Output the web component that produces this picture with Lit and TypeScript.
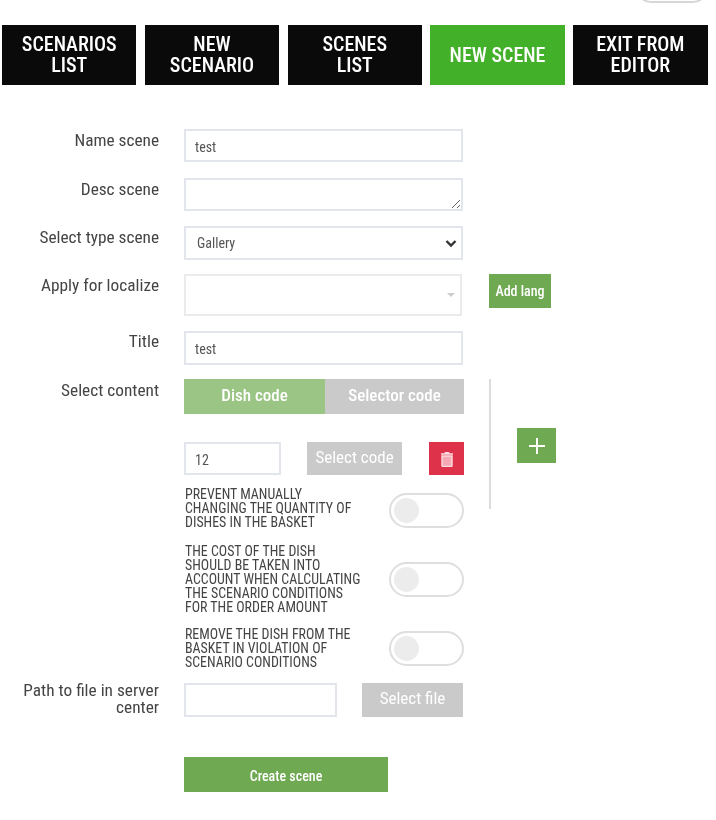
import { LitElement, html, css } from "lit";
import { customElement } from "lit/decorators.js";

@customElement("app-toggle")
class AppToggle extends LitElement {
  static styles = css`
    :host { display: block; flex: none; width: 75px; height: 35px; box-sizing: border-box; border: 2px solid #dedede; border-radius: 18px; background: #fff; padding: 3px; }
    .knob { width: 25px; height: 25px; border-radius: 50%; background: #ececec; }
  `;
  render() { return html`<div class="knob"></div>`; }
}

@customElement("app-root")
export class AppRoot extends LitElement {
  static styles = css`
    :host { display: block; width: 716px; height: 820px; overflow: hidden; background: #fff; font-family: Roboto, "Liberation Sans", sans-serif; color: #444; font-stretch: 75%; filter: blur(0.35px); }
    .corner { height: 3px; overflow: hidden; display: flex; justify-content: flex-end; align-items: flex-end; padding-right: 8px; }
    .corner .pill { width: 72px; height: 30px; flex: none; box-sizing: border-box; border: 2px solid #d6d6d6; border-radius: 15px; }
    nav { display: flex; gap: 8.4px; padding: 22px 0 0 2px; }
    nav a { width: 134.4px; height: 60px; display: flex; align-items: center; justify-content: center; text-align: center; background: #0a0a0a; color: #fff; font-size: 20px; line-height: 21px; font-weight: 500; }
    nav a.on { background: #43b02a; }
    form { display: flex; flex-direction: column; padding: 44px 0 0 0; }
    .row { display: grid; grid-template-columns: 159px 279px auto; column-gap: 25px; align-items: start; }
    label { text-align: right; font-size: 17.3px; line-height: 17px; padding-top: 3px; color: #444; }
    label.title { padding-top: 2px; }
    .box { box-sizing: border-box; width: 100%; border: 2px solid #e2e5eb; background: #fff; color: #555; font-size: 14px; padding: 2px 9px 0; display: flex; align-items: center; }
    .h33 { height: 33px; }
    .ta { position: relative; }
    .grip { position: absolute; right: 0; bottom: 0; }
    .sel { justify-content: space-between; height: 34px; padding: 0 3px 0 11px; }
    .chosen { height: 42px; width: 278px; border-color: #ebebeb; justify-content: flex-end; padding: 0 3px 0 0; }
    .caret { width: 0; height: 0; border: 4px solid transparent; border-top-color: #ccc; border-bottom: 0; margin-right: 2px; }
    .btn { display: flex; align-items: center; justify-content: center; color: #fff; font-size: 17px; box-sizing: border-box; }
    .grey { background: #cacaca; padding-bottom: 4px; }
    .green { background: #6fa952; }
    .addlang { width: 62px; height: 34px; margin-left: 1px; font-size: 14px; font-weight: 500; }
    .seg { display: flex; height: 35px; }
    .seg .btn { font-weight: 500; padding-bottom: 4px; }
    .seg .a { width: 141px; background: #9bc584; }
    .seg .b { flex: 1; background: #cacaca; }
    .content { display: grid; grid-template-columns: 159px 280px 1fr; column-gap: 25px; }
    .editor { display: flex; flex-direction: column; }
    .pick { display: flex; margin-top: 28px; }
    .pick .box { width: 97px; height: 33px; }
    .pick .grey { width: 95px; height: 33px; margin-left: 26px; }
    .trash { width: 35px; height: 33px; margin-left: 27px; background: #dd3249; }
    .side { display: flex; height: 130px; align-items: flex-start; }
    .line { width: 2px; height: 130px; background: #dcdcdc; }
    .plus { width: 39px; height: 35px; margin: 49px 0 0 26px; }
    .opts { display: flex; flex-direction: column; gap: 13px; margin-top: -22px; }
    .opt { display: flex; align-items: center; justify-content: space-between; font-size: 13.9px; line-height: 14px; color: #444; padding-left: 1px; }
    .opt span { white-space: nowrap; }
    .opt.first { align-items: flex-start; height: 44px; }
    .opt.first app-toggle { margin-top: 6px; }
    .path { display: grid; grid-template-columns: 159px 279px; column-gap: 25px; margin-top: 14px; }
    .path label { padding-top: 0; padding-left: 20px; margin-top: -1px; }
    .pathctl { display: flex; justify-content: space-between; }
    .pathctl .box { width: 153px; height: 34px; }
    .pathctl .grey { width: 101px; height: 34px; }
    .create { margin: 40px 0 0 184px; width: 204px; height: 35px; font-size: 14px; font-weight: 500; padding-top: 3px; }
  `;

  render() {
    return html`
      <div class="corner"><div class="pill"></div></div>
      <nav>
        <a>SCENARIOS<br />LIST</a><a>NEW<br />SCENARIO</a><a>SCENES<br />LIST</a><a class="on">NEW SCENE</a><a>EXIT FROM<br />EDITOR</a>
      </nav>
      <form>
        <div class="row" style="margin-bottom:16px"><label>Name scene</label><div class="box h33">test</div></div>
        <div class="row" style="margin-bottom:15px"><label>Desc scene</label>
          <div class="box h33 ta">
            <svg class="grip" width="12" height="12" viewBox="0 0 12 12"><path d="M11 3 3 11M11 8 8 11" stroke="#666" stroke-width="1" fill="none"/></svg>
          </div>
        </div>
        <div class="row" style="margin-bottom:14px"><label>Select type scene</label>
          <div class="box sel"><span>Gallery</span>
            <svg width="14" height="14" viewBox="0 0 14 14"><path d="M2.5 5 7 9.5 11.5 5" stroke="#333" stroke-width="2.4" fill="none"/></svg>
          </div>
        </div>
        <div class="row" style="margin-bottom:15px"><label>Apply for localize</label>
          <div class="box chosen"><i class="caret"></i></div>
          <div class="btn green addlang">Add lang</div>
        </div>
        <div class="row" style="margin-bottom:14px"><label class="title">Title</label><div class="box" style="height:34px">test</div></div>
        <div class="content">
          <label>Select content</label>
          <div class="editor">
            <div class="seg"><div class="btn a">Dish code</div><div class="btn b">Selector code</div></div>
            <div class="pick">
              <div class="box">12</div>
              <div class="btn grey">Select code</div>
              <div class="btn trash">
                <svg width="14" height="16" viewBox="0 0 14 16"><path d="M5 1h4l.6 1.2H13v1.6H1V2.2h3.4z" fill="#fbdde1"/><path d="M2 5h10v9.5a1 1 0 0 1-1 1H3a1 1 0 0 1-1-1z" fill="#f5a9b4" stroke="#fbdde1" stroke-width="1.4"/></svg>
              </div>
            </div>
          </div>
          <div class="side"><div class="line"></div><div class="btn green plus">
            <svg width="20" height="20" viewBox="0 0 20 20"><path d="M10 2v16M2 10h16" stroke="#fff" stroke-width="2" fill="none"/></svg>
          </div></div>
        </div>
        <div class="content">
          <div></div>
          <div class="opts">
            <div class="opt first"><span>PREVENT MANUALLY<br />CHANGING THE QUANTITY OF<br />DISHES IN THE BASKET</span><app-toggle></app-toggle></div>
            <div class="opt"><span>THE COST OF THE DISH<br />SHOULD BE TAKEN INTO<br />ACCOUNT WHEN CALCULATING<br />THE SCENARIO CONDITIONS<br />FOR THE ORDER AMOUNT</span><app-toggle></app-toggle></div>
            <div class="opt"><span>REMOVE THE DISH FROM THE<br />BASKET IN VIOLATION OF<br />SCENARIO CONDITIONS</span><app-toggle></app-toggle></div>
          </div>
        </div>
        <div class="path">
          <label>Path to file in server center</label>
          <div class="pathctl"><div class="box"></div><div class="btn grey">Select file</div></div>
        </div>
        <div class="btn green create">Create scene</div>
      </form>
    `;
  }
}
